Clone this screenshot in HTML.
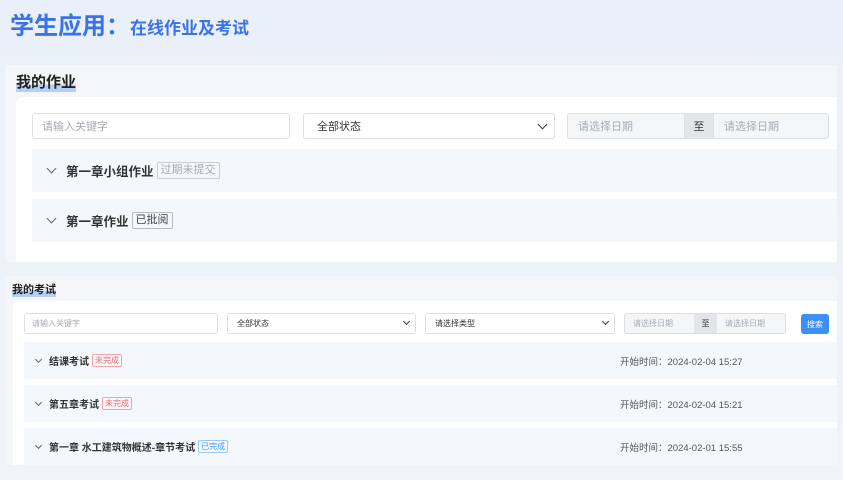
<!DOCTYPE html><html><head><meta charset="utf-8"><style>
*{margin:0;padding:0;box-sizing:border-box}
body{width:843px;height:480px;overflow:hidden;background:linear-gradient(180deg,#eaf0f9 0%,#f0f3f9 100%);font-family:"Liberation Sans","Noto Sans CJK SC",sans-serif;position:relative;color:#333}
.a{position:absolute}
.inp{position:absolute;background:#fff;border:1px solid #dcdfe6;border-radius:3px;color:#a8abb2;display:flex;align-items:center}
.row{position:absolute;background:#f4f7fc;display:flex;align-items:center}
.tag{display:inline-block;border:1px solid #ccc;border-radius:2px;color:#aaa;margin-left:3px;font-weight:normal}
.chev{display:inline-block;width:7px;height:7px;border-right:1.3px solid #666;border-bottom:1.3px solid #666;transform:rotate(45deg)}
</style></head><body>
<div class="a" style="left:10px;top:6px;font-size:24px;font-weight:bold;color:#3b72e8">学生应用：<span style="font-size:17px">在线作业及考试</span></div>

<div class="a" style="left:5px;top:65px;width:832px;height:197px;background:#f4f6fa"></div>
<div class="a" style="left:16px;top:71px;font-size:15px;font-weight:bold;color:#222;background:linear-gradient(transparent 65%,#b5cff5 65%)">我的作业</div>
<div class="a" style="left:16px;top:97px;width:821px;height:165px;background:#fff;border-radius:8px 0 0 0"></div>
<div class="inp" style="left:32px;top:113px;width:258px;height:26px;font-size:11px;padding-left:9px">请输入关键字</div>
<div class="inp" style="left:303px;top:113px;width:252px;height:26px;font-size:11px;padding-left:13px;color:#333">全部状态<span class="chev" style="position:absolute;right:8px;top:7px;border-color:#333"></span></div>
<div class="inp" style="left:567px;top:113px;width:262px;height:26px;font-size:11px;background:#f5f6f8">
<span style="width:116px;padding-left:10px">请选择日期</span><span style="width:30px;height:24px;background:#e4e5e8;color:#333;display:flex;align-items:center;justify-content:center;border-left:1px solid #dcdfe6;border-right:1px solid #dcdfe6">至</span><span style="padding-left:10px">请选择日期</span></div>
<div class="row" style="left:32px;top:149px;width:805px;height:43px;font-size:12.5px;font-weight:bold;padding-left:16px"><span class="chev" style="margin-right:11px;margin-top:-4px"></span>第一章小组作业<span class="tag" style="font-size:11px;padding:0 3px;line-height:15px">过期未提交</span></div>
<div class="row" style="left:32px;top:199px;width:805px;height:43px;font-size:12.5px;font-weight:bold;padding-left:16px"><span class="chev" style="margin-right:11px;margin-top:-4px"></span>第一章作业<span class="tag" style="font-size:11px;padding:0 3px;line-height:15px;color:#444;border-color:#bbb">已批阅</span></div>

<div class="a" style="left:5px;top:276px;width:832px;height:189px;background:#f4f6fa"></div>
<div class="a" style="left:12px;top:281px;font-size:11px;font-weight:bold;color:#222;background:linear-gradient(transparent 60%,#b5cff5 60%)">我的考试</div>
<div class="a" style="left:13px;top:301px;width:824px;height:164px;background:#fff;border-radius:6px 0 0 0"></div>
<div class="inp" style="left:24px;top:313px;width:194px;height:21px;font-size:8px;padding-left:7px">请输入关键字</div>
<div class="inp" style="left:227px;top:313px;width:189px;height:21px;font-size:8px;padding-left:9px;color:#333">全部状态<span class="chev" style="position:absolute;right:6px;top:5px;width:5px;height:5px;border-color:#333"></span></div>
<div class="inp" style="left:425px;top:313px;width:190px;height:21px;font-size:8px;padding-left:9px;color:#333">请选择类型<span class="chev" style="position:absolute;right:6px;top:5px;width:5px;height:5px;border-color:#333"></span></div>
<div class="inp" style="left:624px;top:313px;width:162px;height:21px;font-size:8px;background:#f5f6f8"><span style="width:69px;padding-left:8px">请选择日期</span><span style="width:23px;height:19px;background:#e4e5e8;color:#333;display:flex;align-items:center;justify-content:center">至</span><span style="padding-left:8px">请选择日期</span></div>
<div class="a" style="left:801px;top:314px;width:28px;height:20px;background:#3d8ef7;border-radius:3px;color:#fff;font-size:8px;display:flex;align-items:center;justify-content:center">搜索</div>
<div class="row" style="left:24px;top:342px;width:813px;height:37px;font-size:10px;font-weight:bold;padding-left:12px"><span class="chev" style="width:5px;height:5px;margin-right:8px;margin-top:-3px"></span>结课考试<span class="tag" style="font-size:8px;padding:0 2px;line-height:11px;color:#f56c6c;border-color:#f5a5a5">未完成</span><span class="a" style="left:596px;font-weight:normal;color:#555;font-size:9.5px">开始时间：2024-02-04 15:27</span></div>
<div class="row" style="left:24px;top:385px;width:813px;height:37px;font-size:10px;font-weight:bold;padding-left:12px"><span class="chev" style="width:5px;height:5px;margin-right:8px;margin-top:-3px"></span>第五章考试<span class="tag" style="font-size:8px;padding:0 2px;line-height:11px;color:#f56c6c;border-color:#f5a5a5">未完成</span><span class="a" style="left:596px;font-weight:normal;color:#555;font-size:9.5px">开始时间：2024-02-04 15:21</span></div>
<div class="row" style="left:24px;top:428px;width:813px;height:37px;font-size:10px;font-weight:bold;padding-left:12px"><span class="chev" style="width:5px;height:5px;margin-right:8px;margin-top:-3px"></span>第一章 水工建筑物概述-章节考试<span class="tag" style="font-size:8px;padding:0 2px;line-height:11px;color:#409eff;border-color:#9cc8f7">已完成</span><span class="a" style="left:596px;font-weight:normal;color:#555;font-size:9.5px">开始时间：2024-02-01 15:55</span></div>
</body></html>
